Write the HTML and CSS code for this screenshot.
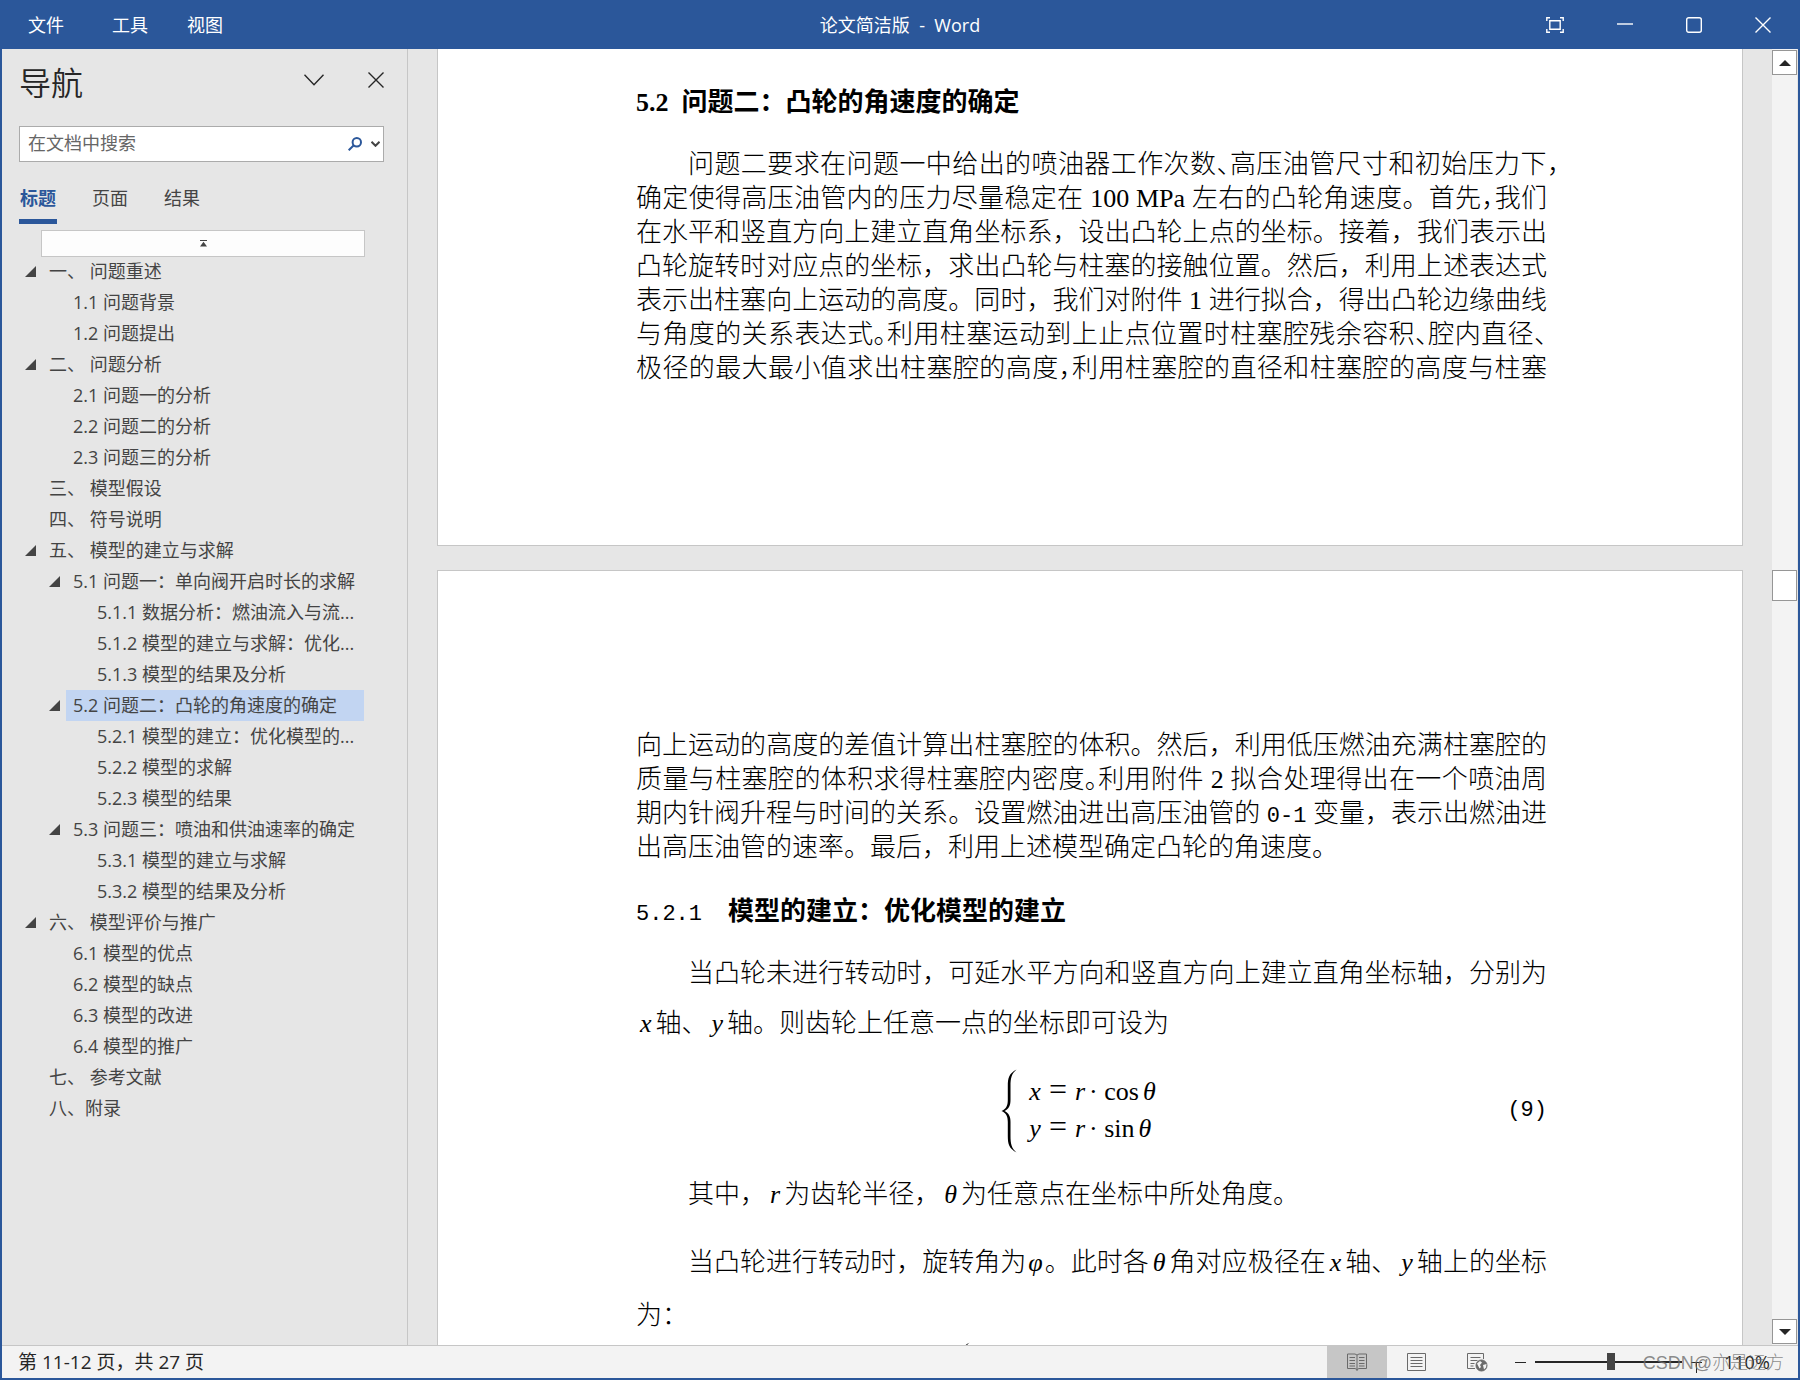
FILE: index.html
```html
<!DOCTYPE html>
<html lang="zh-CN">
<head>
<meta charset="utf-8">
<title>论文简洁版 - Word</title>
<link rel="stylesheet" href="styles.css">
</head>
<body>
<div class="window">
  <header class="titlebar">
    <nav class="menu">
      <button type="button" class="menu-file">文件</button>
      <button type="button">工具</button>
      <button type="button">视图</button>
    </nav>
    <h1 class="doc-name">论文简洁版&nbsp; -&nbsp; Word</h1>
    <div class="win-controls">
      <button type="button" aria-label="全屏"><svg width="18" height="16" viewBox="0 0 18 16"><path d="M.8 4V.8H4M14 .8h3.200V4M17.200 12v3.200H14M4 15.200H.8V12M3.800 3.800h10.400v8.400H3.800z"/></svg></button>
      <button type="button" aria-label="最小化"><svg width="16" height="16" viewBox="0 0 16 16"><path d="M0 7h16"/></svg></button>
      <button type="button" aria-label="最大化"><svg width="16" height="16" viewBox="0 0 16 16"><rect x=".7" y=".7" width="14.600" height="14.600" rx="2"/></svg></button>
      <button type="button" aria-label="关闭"><svg width="16" height="16" viewBox="0 0 16 16"><path d="M.5.5l15 15M15.500.5l-15 15"/></svg></button>
    </div>
  </header>

  <div class="workspace">
    <aside class="nav-pane">
      <div class="nav-head">
        <h2>导航</h2>
        <div class="nav-actions">
          <button type="button" aria-label="选项"><svg width="20" height="12" viewBox="0 0 20 12"><path d="M.5.700l9.500 10 9.500-10"/></svg></button>
          <button type="button" aria-label="关闭导航"><svg width="16" height="16" viewBox="0 0 16 16"><path d="M.5.5l15 15M15.500.5l-15 15"/></svg></button>
        </div>
      </div>
      <div class="search">
        <input type="text" placeholder="在文档中搜索" aria-label="在文档中搜索">
        <button type="button" aria-label="搜索"><svg class="glass" width="14" height="14" viewBox="0 0 14 14"><circle cx="8.800" cy="5.200" r="4.200"/><path d="M5.800 8.200L.7 13.300"/></svg></button>
        <button type="button" aria-label="搜索选项"><svg class="caret" width="9" height="6" viewBox="0 0 9 6"><path d="M.5.800l4 4 4-4"/></svg></button>
      </div>
      <div class="tabs">
        <button type="button" class="active">标题</button>
        <button type="button">页面</button>
        <button type="button">结果</button>
      </div>
      <button type="button" class="to-top" aria-label="跳转到开头"><svg width="7" height="7" viewBox="0 0 7 7"><path d="M0 0h7v1H0zM3.500 1.800L7 6.500H0z"/></svg></button>
      <ul class="tree">
        <li class="open"><a href="#">一、 问题重述</a></li>
        <li class="l2"><a href="#">1.1 问题背景</a></li>
        <li class="l2"><a href="#">1.2 问题提出</a></li>
        <li class="open"><a href="#">二、 问题分析</a></li>
        <li class="l2"><a href="#">2.1 问题一的分析</a></li>
        <li class="l2"><a href="#">2.2 问题二的分析</a></li>
        <li class="l2"><a href="#">2.3 问题三的分析</a></li>
        <li><a href="#">三、 模型假设</a></li>
        <li><a href="#">四、 符号说明</a></li>
        <li class="open"><a href="#">五、 模型的建立与求解</a></li>
        <li class="l2 open"><a href="#">5.1 问题一：单向阀开启时长的求解</a></li>
        <li class="l3"><a href="#">5.1.1 数据分析：燃油流入与流...</a></li>
        <li class="l3"><a href="#">5.1.2 模型的建立与求解：优化...</a></li>
        <li class="l3"><a href="#">5.1.3 模型的结果及分析</a></li>
        <li class="l2 open selected"><a href="#">5.2 问题二：凸轮的角速度的确定</a></li>
        <li class="l3"><a href="#">5.2.1 模型的建立：优化模型的...</a></li>
        <li class="l3"><a href="#">5.2.2 模型的求解</a></li>
        <li class="l3"><a href="#">5.2.3 模型的结果</a></li>
        <li class="l2 open"><a href="#">5.3 问题三：喷油和供油速率的确定</a></li>
        <li class="l3"><a href="#">5.3.1 模型的建立与求解</a></li>
        <li class="l3"><a href="#">5.3.2 模型的结果及分析</a></li>
        <li class="open"><a href="#">六、 模型评价与推广</a></li>
        <li class="l2"><a href="#">6.1 模型的优点</a></li>
        <li class="l2"><a href="#">6.2 模型的缺点</a></li>
        <li class="l2"><a href="#">6.3 模型的改进</a></li>
        <li class="l2"><a href="#">6.4 模型的推广</a></li>
        <li><a href="#">七、 参考文献</a></li>
        <li><a href="#">八、附录</a></li>
      </ul>
    </aside>

    <main class="pages">
      <section class="page page-first">
        <h3>5.2&nbsp; 问题二：凸轮的角速度的确定</h3>
        <p>
          <span class="line indent">问题二要求在问题一中给出的喷油器工作次数<span class="half">、</span>高压油管尺寸和初始压力下<span class="hang">，</span></span>
          <span class="line">确定使得高压油管内的压力尽量稳定在 100 MPa 左右的凸轮角速度。首先<span class="half">，</span>我们</span>
          <span class="line">在水平和竖直方向上建立直角坐标系，设出凸轮上点的坐标。接着，我们表示出</span>
          <span class="line">凸轮旋转时对应点的坐标，求出凸轮与柱塞的接触位置。然后，利用上述表达式</span>
          <span class="line">表示出柱塞向上运动的高度。同时，我们对附件 1 进行拟合，得出凸轮边缘曲线</span>
          <span class="line">与角度的关系表达式<span class="half">。</span>利用柱塞运动到上止点位置时柱塞腔残余容积<span class="half">、</span>腔内直径<span class="half">、</span></span>
          <span class="line">极径的最大最小值求出柱塞腔的高度<span class="half">，</span>利用柱塞腔的直径和柱塞腔的高度与柱塞</span>
        </p>
      </section>
      <section class="page page-second">
        <p>
          <span class="line">向上运动的高度的差值计算出柱塞腔的体积。然后，利用低压燃油充满柱塞腔的</span>
          <span class="line">质量与柱塞腔的体积求得柱塞腔内密度<span class="half">。</span>利用附件 2 拟合处理得出在一个喷油周</span>
          <span class="line">期内针阀升程与时间的关系。设置燃油进出高压油管的 <span class="mono">0-1</span> 变量，表示出燃油进</span>
          <span class="line last">出高压油管的速率。最后，利用上述模型确定凸轮的角速度。</span>
        </p>
        <h3><span class="mono num">5.2.1</span>模型的建立：优化模型的建立</h3>
        <p class="loose">
          <span class="line indent">当凸轮未进行转动时，可延水平方向和竖直方向上建立直角坐标轴，分别为</span>
          <span class="line last"><var>x</var>轴、<var>y</var>轴。则齿轮上任意一点的坐标即可设为</span>
        </p>
        <div class="equation">
          <svg class="brace" width="16" height="84" viewBox="0 0 16 84"><path d="M15.500.5C8 4.500 6.800 9 6.800 17v14c0 6-1.800 9-6.300 11 4.500 2 6.300 5 6.300 11v14c0 8 1.200 12.500 8.700 16.500C10.500 79 9.500 75 9.500 67V53c0-6-2-9-6-11 4-2 6-5 6-11V17c0-8 1-12 6-16.500z"/></svg>
          <div class="cases">
            <div><var>x</var><span class="op">=</span><var>r</var>· cos<var>θ</var></div>
            <div><var>y</var><span class="op">=</span><var>r</var>· sin<var>θ</var></div>
          </div>
          <span class="eq-no mono">(9)</span>
        </div>
        <p class="loose where"><span class="line indent last">其中，<var>r</var>为齿轮半径，<var>θ</var>为任意点在坐标中所处角度。</span></p>
        <p class="loose rotate">
          <span class="line indent">当凸轮进行转动时，旋转角为<var class="tight">φ</var>。此时各<var>θ</var>角对应极径在<var>x</var>轴、<var>y</var>轴上的坐标</span>
          <span class="line last">为：</span>
        </p>
        <svg class="brace next-brace" width="16" height="84" viewBox="0 0 16 84"><path d="M15.500.5C8 4.500 6.800 9 6.800 17v14c0 6-1.800 9-6.300 11 4.500 2 6.300 5 6.300 11v14c0 8 1.200 12.500 8.700 16.500C10.500 79 9.500 75 9.500 67V53c0-6-2-9-6-11 4-2 6-5 6-11V17c0-8 1-12 6-16.500z"/></svg>
      </section>
    </main>

    <div class="scrollbar">
      <button type="button" aria-label="向上滚动"><svg width="12" height="6" viewBox="0 0 12 6"><path d="M6 0l6 6H0z"/></svg></button>
      <div class="track"><div class="thumb"></div></div>
      <button type="button" aria-label="向下滚动"><svg width="12" height="6" viewBox="0 0 12 6"><path d="M6 6L0 0h12z"/></svg></button>
    </div>
  </div>

  <footer class="status">
    <span class="page-count">第 11-12 页，共 27 页</span>
    <div class="views">
      <button type="button" class="active" aria-label="阅读视图"><svg width="20" height="18" viewBox="0 0 20 18"><path d="M.5 1h7.500l2 1 2-1h7.500v14.500H12l-2 1-2-1H.5zM10 2v16M2.500 4.500H8M2.500 7.500H8M2.500 10.500H8M2.500 13H8M12 4.500h5.500M12 7.500h5.500M12 10.500h5.500M12 13h5.500"/></svg></button>
      <button type="button" aria-label="页面视图"><svg width="20" height="18" viewBox="0 0 20 18"><path d="M.5.5h18v17H.5zM3.500 4.500h12M3.500 7.500h12M3.500 10.500h12M3.500 13.500h12"/></svg></button>
      <button type="button" aria-label="Web 版式"><svg width="21" height="19" viewBox="0 0 21 19"><path d="M8 15.500H.5V.5h16V6M3.500 4.500h10M3.500 7.500h7M3.500 10.500h4M3.500 13h3"/><circle class="globe" cx="14.500" cy="12.500" r="5.500"/><path class="land" d="M10 10.500l3-2.500 2 1.500-2 2.500 1 2-1.500 1.500zM16 12l3.500-1-.5 3.500-2 2z"/></svg></button>
    </div>
    <div class="zoom">
      <span class="minus"></span>
      <input type="range" min="10" max="210" value="114" aria-label="缩放">
      <span class="plus"></span>
      <span class="percent">110%</span>
    </div>
    <span class="watermark">CSDN@亦是远方</span>
  </footer>
</div>
</body>
</html>
```
FILE: styles.css
```css
* { box-sizing: border-box; }
body {
  margin: 0;
  font: 18px/24px "Open Sans", "Noto Sans CJK SC", sans-serif;
  color: #444;
}
button { border: 0; padding: 0; background: none; font: inherit; color: inherit; }
svg { display: block; fill: none; stroke: currentColor; }
h1, h2, h3, p, ul { margin: 0; padding: 0; }

.window {
  display: flex;
  flex-direction: column;
  height: 100vh;
  border: 2px solid #2b579a;
  border-top: 0;
  background: #e6e6e6;
}

/* title bar */
.titlebar {
  display: grid;
  grid-template-columns: 1fr auto 1fr;
  align-items: center;
  height: 49px;
  flex: none;
  background: #2b579a;
  color: #fff;
}
.menu { display: flex; gap: 39px; padding-left: 26px; }
.menu-file { margin-right: 9px; }
.doc-name { font-size: 18px; font-weight: 400; }
.win-controls { display: flex; justify-content: flex-end; gap: 53px; padding-right: 27px; }
.win-controls svg { stroke-width: 1.400; }

.workspace { display: flex; flex: 1; min-height: 0; }

/* navigation pane */
.nav-pane {
  width: 406px;
  flex: none;
  padding: 14px 23px 0 17px;
  border-right: 1px solid #c6c6c6;
}
.nav-head { display: flex; justify-content: space-between; height: 63px; }
.nav-head h2 { font-size: 32px; line-height: 40px; font-weight: 350; color: #262626; }
.nav-actions { display: flex; align-items: center; gap: 44px; height: 34px; color: #262626; }
.nav-actions svg { stroke-width: 1.400; }
.search {
  display: flex;
  align-items: center;
  gap: 9px;
  height: 36px;
  padding: 0 3px 0 8px;
  border: 1px solid #ababab;
  background: #fff;
}
.search input {
  flex: 1;
  min-width: 0;
  padding: 0 0 2px;
  border: 0;
  outline: 0;
  background: none;
  font: inherit;
}
.search input::placeholder { color: #666; opacity: 1; }
.glass { color: #2b579a; stroke-width: 2; }
.caret { stroke-width: 2; }
.tabs { display: flex; gap: 34px; height: 68px; padding-top: 24px; }
.tabs button { height: 38px; padding: 0 1px 9px; border-bottom: 5px solid transparent; }
.tabs .active { color: #2b579a; font-weight: 700; border-color: #2b579a; }
.to-top {
  display: grid;
  place-items: center;
  width: calc(100% - 41px);
  height: 27px;
  margin-left: 22px;
  border: 1px solid #c6c6c6;
  background: #fdfdfd;
}
.to-top svg { fill: #444; stroke: none; }

.tree { list-style: none; margin: -1px 20px 0 0; }
.tree li { display: flex; align-items: center; height: 31px; padding-left: 6px; }
.tree li::before { content: ""; width: 11px; height: 11px; flex: none; }
.tree .open::before { background: #444; clip-path: polygon(100% 0, 100% 100%, 0 100%); }
.tree .l2 { padding-left: 30px; }
.tree .l3 { padding-left: 54px; }
.tree a {
  flex: 1;
  margin-left: 6px;
  padding: 0 0 0 7px;
  line-height: 31px;
  white-space: nowrap;
  color: inherit;
  text-decoration: none;
}
.tree .selected a { background: #c2d5f2; }

/* document */
.pages { flex: 1; min-width: 0; padding: 0 29px; overflow: hidden; }
.page {
  padding: 0 195px 0 198px;
  border: 1px solid #c6c6c6;
  background: #fff;
  color: #000;
  font: 300 26px/34px "Liberation Serif", "Noto Sans CJK SC", serif;
}
.page-first { padding-top: 37px; padding-bottom: 159px; border-top: 0; }
.page-second { margin-top: 24px; padding-top: 158px; }
.page h3 { font-size: 26px; font-weight: 700; white-space: nowrap; }
.page-first h3 { margin-bottom: 28px; }
.page-second h3 { margin: 30px 0 20px; }
.line { display: block; white-space: nowrap; text-align: justify; text-align-last: justify; }
.last { text-align-last: left; }
.indent { padding-left: 52px; }
.half { font-feature-settings: "halt"; }
.hang { margin-right: -26px; }
.mono { font-family: "Liberation Mono", monospace; font-size: 22px; line-height: 22px; font-weight: 400; }
.num { margin-right: 26px; }
.page var { margin: 0 4px; font-style: italic; }
.page .tight { margin: 0 2px; }
.loose { line-height: 50px; }
.equation {
  display: grid;
  grid-template-columns: 1fr auto auto 1fr;
  align-items: center;
  height: 100px;
  margin-top: 12px;
}
.equation .brace { grid-column: 2; }
.brace { fill: #000; stroke: none; }
.cases { padding: 0 22px 2px 8px; line-height: 37px; }
.op { margin: 0 4px; font-size: 32px; line-height: 32px; }
.eq-no { justify-self: end; }
.where { margin-top: 9px; }
.rotate { margin-top: 16px; line-height: 53px; }
.next-brace { margin-left: 318px; }

/* scroll bar */
.scrollbar {
  display: flex;
  flex-direction: column;
  width: 25px;
  flex: none;
  margin-right: 1px;
  padding: 1px 0;
  background: #f3f3f3;
}
.scrollbar button, .thumb { border: 1px solid #969696; background: #fff; }
.scrollbar button { display: grid; place-items: center; height: 25px; }
.scrollbar svg { fill: #262626; stroke: none; }
.track { flex: 1; }
.thumb { height: 31px; margin-top: 495px; }

/* status bar */
.status {
  position: relative;
  display: flex;
  height: 33px;
  flex: none;
  border-top: 1px solid #c6c6c6;
  background: #f3f3f3;
}
.page-count { flex: 1; padding-left: 16px; font-size: 19px; line-height: 33px; color: #262626; }
.views { display: flex; color: #6a6a6a; }
.views button { display: grid; place-items: center; width: 60px; }
.views .active { background: #c6c6c6; }
.globe { fill: #6a6a6a; }
.land { fill: #f3f3f3; stroke: none; }
.zoom { display: flex; align-items: center; width: 291px; padding-left: 8px; color: #262626; }
.minus, .plus { width: 11px; height: 1px; background: #262626; }
.plus { display: grid; place-items: center; }
.plus::before { content: ""; width: 1px; height: 11px; background: #262626; }
.zoom input { appearance: none; width: 147px; height: 17px; margin: 0 9px; background: none; }
.zoom input::-webkit-slider-runnable-track { height: 2px; background: #262626; }
.zoom input::-webkit-slider-thumb { appearance: none; width: 8px; height: 17px; margin-top: -8px; background: #444; }
.percent { margin-left: 22px; }
.watermark {
  position: absolute;
  right: 14px;
  top: 5px;
  font: 300 18px/24px "Liberation Sans", "Noto Sans CJK SC", sans-serif;
  color: rgba(110, 110, 110, 0.800);
}
```
